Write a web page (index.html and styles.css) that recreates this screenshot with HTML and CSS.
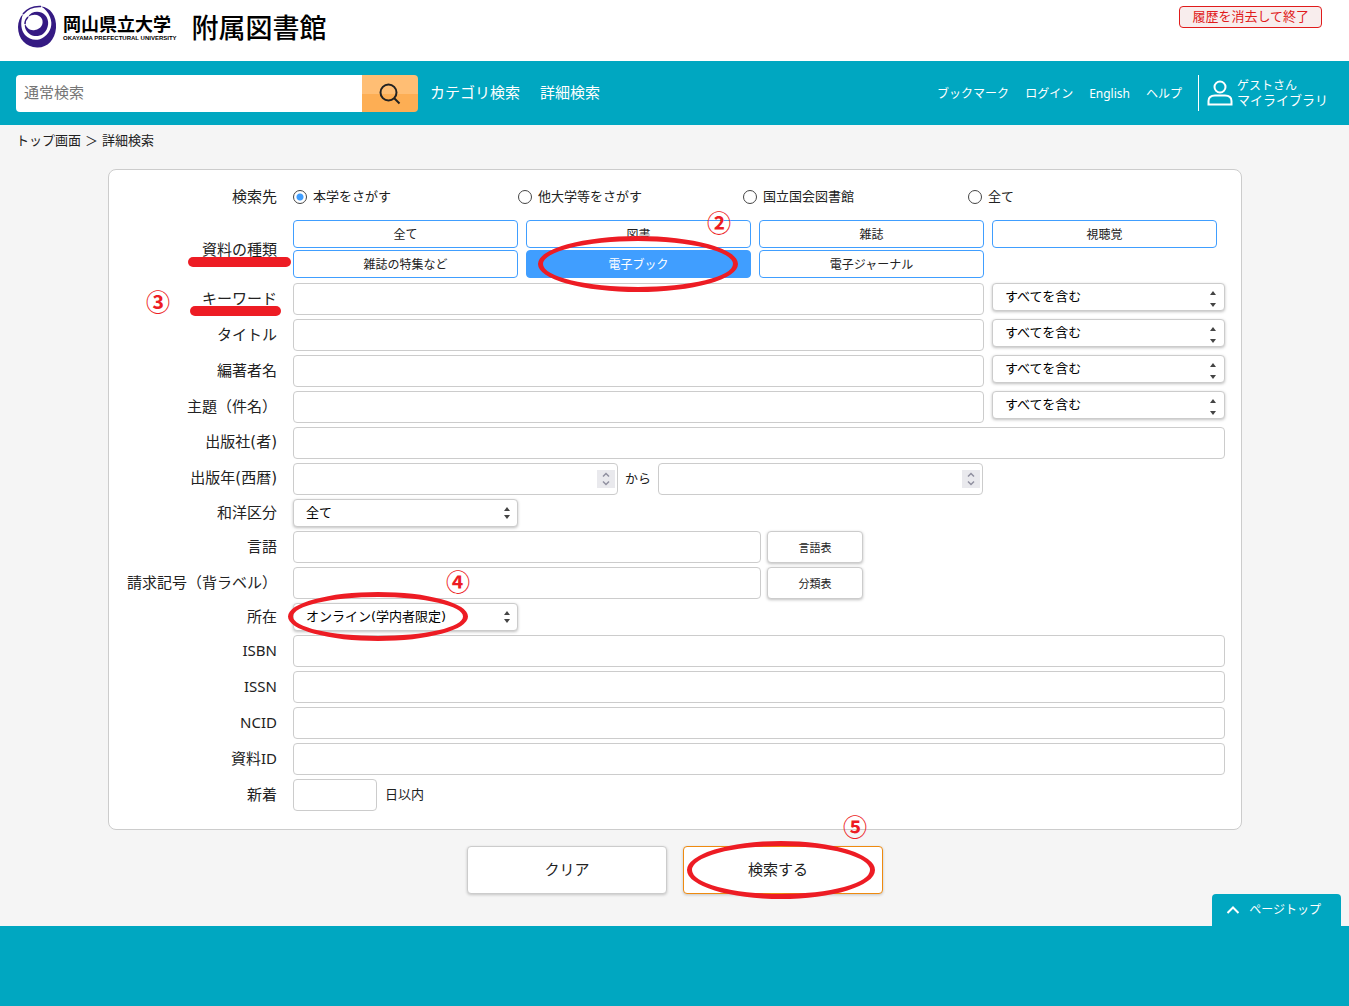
FILE: index.html
```html
<!DOCTYPE html>
<html lang="ja">
<head>
<meta charset="utf-8">
<meta name="viewport" content="width=device-width, initial-scale=1">
<title>詳細検索 - 岡山県立大学 附属図書館</title>
<link rel="stylesheet" href="styles.css">
</head>
<body>
<header class="site-header">
  <a class="brand" href="#">
    <svg class="brand-mark" viewBox="0 0 42 44" aria-hidden="true">
      <path d="M25 1.500C34 2 41 11 40 23C39 35 31 43 21 42.500C10 42 2 34 2 22C2 17 4 12 7 9C4 18 5 25 9 30C14 35.500 22 36.500 28 32C35 27 37 19 34 12C32 7 29 3.500 25 1.500Z" fill="#351a83"/>
      <path d="M12 12C15 6 24 5 29 10C34 15 33 24 27 29C21 33 13 31 10 25C9 23 8.500 21 9 19C11 23 14 26 19 25C25 24 28 19 26 14C24 10 18 8 12 12Z" fill="#351a83"/>
      <path d="M7 9C11 4 17 1 25 1.500M9 19C9 16 10 14 12 12" fill="none" stroke="#351a83" stroke-width="1.500"/>
    </svg>
    <span class="brand-text">
      <span class="brand-name">岡山県立大学</span>
      <span class="brand-sub">OKAYAMA PREFECTURAL UNIVERSITY</span>
    </span>
    <span class="brand-library">附属図書館</span>
  </a>
  <button class="exit-button" type="button">履歴を消去して終了</button>
</header>

<nav class="navbar">
  <form class="quick-search">
    <input class="quick-input" type="text" placeholder="通常検索" aria-label="通常検索">
    <button class="quick-button" type="button" aria-label="検索">
      <svg width="22" height="22" viewBox="0 0 22 22" fill="none" stroke="#222" stroke-width="2" aria-hidden="true"><circle cx="9.500" cy="9.500" r="8"/><path d="M15 15l5.500 5.500"/></svg>
    </button>
  </form>
  <div class="nav-main">
    <a href="#">カテゴリ検索</a>
    <a href="#">詳細検索</a>
  </div>
  <div class="nav-side">
    <a class="nav-link" href="#">ブックマーク</a>
    <a class="nav-link" href="#">ログイン</a>
    <a class="nav-link" href="#">English</a>
    <a class="nav-link" href="#">ヘルプ</a>
    <a class="user" href="#">
      <svg width="26" height="28" viewBox="0 0 26 28" fill="none" stroke="#fff" stroke-width="2" aria-hidden="true"><circle cx="13" cy="8" r="5.500"/><path d="M1.500 25.500V22C1.500 18.500 4 16.500 8 16.500H18C22 16.500 24.500 18.500 24.500 22V25.500Z"/></svg>
      <span class="user-text"><span class="user-name">ゲストさん</span><span>マイライブラリ</span></span>
    </a>
  </div>
</nav>

<main class="page">
  <div class="breadcrumb"><a href="#">トップ画面</a><span>＞</span><span>詳細検索</span></div>

  <form class="search-form">
    <div class="card">
      <div class="row row-target" role="radiogroup" aria-labelledby="l-target">
        <span class="label" id="l-target">検索先</span>
        <div class="radios">
          <label><input type="radio" name="target" checked><span>本学をさがす</span></label>
          <label><input type="radio" name="target"><span>他大学等をさがす</span></label>
          <label><input type="radio" name="target"><span>国立国会図書館</span></label>
          <label><input type="radio" name="target"><span>全て</span></label>
        </div>
      </div>
      <div class="row">
        <span class="label">資料の種類<i class="underline underline-type"></i></span>
        <div class="types">
          <button type="button">全て</button>
          <button type="button">図書</button>
          <button type="button">雑誌</button>
          <button type="button">視聴覚</button>
          <button type="button">雑誌の特集など</button>
          <button type="button" class="active">電子ブック<i class="ring ring-type"></i><b class="step step-2">②</b></button>
          <button type="button">電子ジャーナル</button>
        </div>
      </div>
      <div class="row">
        <label class="label" for="keyword">キーワード<i class="underline underline-keyword"></i><b class="step step-3">③</b></label>
        <div class="with-match">
          <input class="field" id="keyword" type="text">
          <select class="select select-tall" aria-label="キーワードの条件"><option>すべてを含む</option></select>
        </div>
      </div>
      <div class="row">
        <label class="label" for="title">タイトル</label>
        <div class="with-match">
          <input class="field" id="title" type="text">
          <select class="select select-tall" aria-label="タイトルの条件"><option>すべてを含む</option></select>
        </div>
      </div>
      <div class="row">
        <label class="label" for="author">編著者名</label>
        <div class="with-match">
          <input class="field" id="author" type="text">
          <select class="select select-tall" aria-label="編著者名の条件"><option>すべてを含む</option></select>
        </div>
      </div>
      <div class="row">
        <label class="label" for="subject">主題（件名）</label>
        <div class="with-match">
          <input class="field" id="subject" type="text">
          <select class="select select-tall" aria-label="主題の条件"><option>すべてを含む</option></select>
        </div>
      </div>
      <div class="row">
        <label class="label wide-parens" for="publisher">出版社(者)</label>
        <input class="field" id="publisher" type="text">
      </div>
      <div class="row">
        <label class="label wide-parens" for="year-from">出版年(西暦)</label>
        <div class="years">
          <input class="field number" id="year-from" type="number">
          <label for="year-to">から</label>
          <input class="field number" id="year-to" type="number">
        </div>
      </div>
      <div class="row">
        <label class="label" for="division">和洋区分</label>
        <select class="select select-short" id="division"><option>全て</option></select>
      </div>
      <div class="row">
        <label class="label" for="language">言語</label>
        <div class="with-table">
          <input class="field" id="language" type="text">
          <button class="table-button" type="button">言語表</button>
        </div>
      </div>
      <div class="row">
        <label class="label" for="callno">請求記号（背ラベル）</label>
        <div class="with-table">
          <input class="field" id="callno" type="text">
          <button class="table-button" type="button">分類表</button>
        </div>
      </div>
      <div class="row">
        <label class="label" for="location">所在</label>
        <div class="location">
          <select class="select select-short wide-parens" id="location"><option>オンライン(学内者限定)</option></select>
          <i class="ring ring-location"></i><b class="step step-4">④</b>
        </div>
      </div>
      <div class="row">
        <label class="label" for="isbn">ISBN</label>
        <input class="field" id="isbn" type="text">
      </div>
      <div class="row">
        <label class="label" for="issn">ISSN</label>
        <input class="field" id="issn" type="text">
      </div>
      <div class="row">
        <label class="label" for="ncid">NCID</label>
        <input class="field" id="ncid" type="text">
      </div>
      <div class="row">
        <label class="label" for="material">資料ID</label>
        <input class="field" id="material" type="text">
      </div>
      <div class="row">
        <label class="label" for="recent">新着</label>
        <div class="recent">
          <input class="field" id="recent" type="text">
          <span>日以内</span>
        </div>
      </div>
    </div>

    <div class="actions">
      <button class="action" type="reset">クリア</button>
      <button class="action action-primary" type="button">検索する<i class="ring ring-submit"></i><b class="step step-5">⑤</b></button>
    </div>
  </form>
</main>

<footer class="footer">
  <a class="page-top" href="#">
    <svg width="14" height="10" viewBox="0 0 14 10" fill="none" stroke="#fff" stroke-width="2" aria-hidden="true"><path d="M1.500 8L7 2.500L12.500 8"/></svg>
    ページトップ
  </a>
</footer>
</body>
</html>
```
FILE: styles.css
```css
* {
  box-sizing: border-box;
}

body {
  margin: 0;
  background: #00a7c1;
  color: #222;
  font-family: "Noto Sans", "Noto Sans CJK JP", sans-serif;
  font-size: 13px;
  line-height: 20px;
}

button,
input,
select {
  margin: 0;
  font-family: inherit;
  color: inherit;
}

a {
  color: inherit;
  text-decoration: none;
}

i,
b {
  font-style: normal;
}

/* Header */
.site-header {
  display: flex;
  justify-content: space-between;
  align-items: flex-start;
  height: 61px;
  padding: 5px 27px 0 16px;
  background: #fff;
}

.brand {
  display: flex;
  align-items: center;
  color: #000;
}

.brand-mark {
  width: 42px;
  height: 44px;
}

.brand-text {
  display: flex;
  flex-direction: column;
  margin: 2px 15px 0 5px;
}

.brand-name {
  font-size: 18px;
  font-weight: 700;
  line-height: 20px;
}

.brand-sub {
  font-family: "Liberation Sans", sans-serif;
  font-size: 6px;
  font-weight: 700;
  line-height: 8px;
  white-space: nowrap;
}

.brand-library {
  font-family: "Noto Sans CJK JP", sans-serif;
  font-size: 27px;
  font-weight: 500;
  line-height: 40px;
}

.exit-button {
  height: 22px;
  margin-top: 1px;
  padding: 0 12px 2px;
  border: 1px solid #e01b1b;
  border-radius: 4px;
  background: #f8eded;
  color: #e01b1b;
  font-size: 13px;
  line-height: 18px;
}

/* Navigation */
.navbar {
  display: flex;
  align-items: center;
  height: 64px;
  padding: 0 21px 0 16px;
  background: #00a7c1;
  color: #fff;
}

.quick-search {
  display: flex;
  flex: 0 1 402px;
  height: 37px;
}

.quick-input {
  flex: 1;
  min-width: 0;
  padding: 0 8px 2px;
  border: 0;
  border-radius: 4px 0 0 4px;
  background: #fff;
  color: #222;
  font-size: 15px;
}

.quick-input::placeholder {
  color: #757575;
}

.quick-button {
  display: flex;
  align-items: center;
  justify-content: center;
  width: 56px;
  padding: 2px 0 0;
  border: 0;
  border-radius: 0 4px 4px 0;
  background: linear-gradient(#ffbe74 50%, #fdae54 50%);
}

.nav-main {
  display: flex;
  gap: 20px;
  margin-left: 12px;
  padding-bottom: 2px;
  font-size: 15px;
  white-space: nowrap;
}

.nav-side {
  display: flex;
  align-items: center;
  gap: 16px;
  margin-left: auto;
  font-size: 12px;
  white-space: nowrap;
}

.nav-link {
  padding-top: 2px;
}

.user {
  display: flex;
  align-items: center;
  gap: 4px;
  height: 36px;
  padding-left: 8px;
  border-left: 1px solid #fff;
  font-size: 13px;
  line-height: 15px;
}

.user-text {
  display: flex;
  flex-direction: column;
}

.user-name {
  font-size: 12px;
}

/* Page */
.page {
  padding: 5px 107px 32px 108px;
  background: #f5f5f5;
}

.breadcrumb {
  display: flex;
  gap: 4px;
  margin: 0 0 19px -92px;
}

.card {
  display: flex;
  flex-direction: column;
  gap: 4px;
  padding: 8px 16px 18px 0;
  border: 1px solid #ccc;
  border-radius: 8px;
  background: #fff;
}

.row {
  display: grid;
  grid-template-columns: 168px minmax(0, 1fr);
  column-gap: 16px;
  align-items: center;
}

.row-target {
  min-height: 38px;
}

.label {
  position: relative;
  justify-self: end;
  padding-bottom: 2px;
  font-size: 15px;
  white-space: nowrap;
}

.wide-parens {
  font-family: "DejaVu Sans", "Noto Sans CJK JP", sans-serif;
}

.radios {
  display: flex;
}

.radios label {
  display: flex;
  align-items: center;
  gap: 6px;
  flex: 0 1 225px;
}

.radios span,
.recent span,
.years label {
  padding-bottom: 2px;
}

.radios input {
  appearance: none;
  width: 14px;
  height: 14px;
  border: 1px solid #444;
  border-radius: 50%;
  background: #fff;
}

.radios input:checked {
  background: radial-gradient(circle, #409eff 3px, #fff 4px);
}

.types {
  display: grid;
  grid-template-columns: repeat(4, 1fr);
  gap: 2px 8px;
  padding: 0 8px 1px 0;
}

.types button {
  position: relative;
  height: 28px;
  padding: 0 0 1px;
  border: 1px solid #409eff;
  border-radius: 4px;
  background: #fff;
  font-size: 12px;
}

.types .active {
  z-index: 1;
  background: #409eff;
  color: #fff;
}

.field {
  width: 100%;
  min-width: 0;
  height: 32px;
  padding: 0 8px;
  border: 1px solid #ccc;
  border-radius: 4px;
  background: #fff;
  font-size: 13px;
}

.select {
  appearance: none;
  height: 28px;
  padding: 0 24px 2px 12px;
  border: 1px solid #ccc;
  border-radius: 4px;
  background: #fff no-repeat;
  box-shadow: 0 1px 3px rgba(0, 0, 0, 0.25);
  color: #000;
  font-size: 13px;
}

.select-short {
  width: 225px;
  background-image: url("data:image/svg+xml,%3Csvg xmlns='http://www.w3.org/2000/svg' width='6' height='12'%3E%3Cpath d='M0 4L3 0L6 4ZM0 8L3 12L6 8Z' fill='%23444'/%3E%3C/svg%3E");
  background-position: right 7px center;
}

.select-tall {
  width: 100%;
  background-image: url("data:image/svg+xml,%3Csvg xmlns='http://www.w3.org/2000/svg' width='6' height='16'%3E%3Cpath d='M0 4L3 0L6 4ZM0 12L3 16L6 12Z' fill='%23444'/%3E%3C/svg%3E");
  background-position: right 8px bottom 3px;
}

.with-match {
  display: grid;
  grid-template-columns: calc(75% - 8px) 1fr;
  gap: 8px;
}

.years {
  display: flex;
  align-items: center;
  gap: 7px;
}

.number {
  appearance: textfield;
  width: 325px;
  padding-right: 24px;
  background: #fff url("data:image/svg+xml,%3Csvg xmlns='http://www.w3.org/2000/svg' width='18' height='18'%3E%3Cpath d='M0 0H18V18H0Z' fill='%23e9e9ed'/%3E%3Cpath d='M6 6.500L9 3.500L12 6.500M6 11.500L9 14.500L12 11.500' fill='none' stroke='%239090a0' stroke-width='1.500'/%3E%3C/svg%3E") no-repeat right 2px center;
}

.number::-webkit-inner-spin-button {
  appearance: none;
}

.with-table {
  display: flex;
  gap: 6px;
}

.with-table .field {
  width: 468px;
}

.table-button {
  width: 96px;
  padding-bottom: 2px;
  border: 1px solid #ccc;
  border-radius: 4px;
  background: #fff;
  box-shadow: 0 1px 3px rgba(0, 0, 0, 0.25);
  font-size: 11px;
}

.location {
  position: relative;
  display: flex;
}

.recent {
  display: flex;
  align-items: center;
  gap: 8px;
}

.recent .field {
  width: 84px;
}

.actions {
  display: flex;
  justify-content: center;
  gap: 16px;
  margin-top: 16px;
}

.action {
  position: relative;
  width: 200px;
  height: 48px;
  padding: 0 0 4px;
  border: 1px solid #ccc;
  border-radius: 4px;
  background: #fff;
  box-shadow: 0 1px 3px rgba(0, 0, 0, 0.2);
  font-size: 15px;
}

.action-primary {
  padding-right: 10px;
  border-color: #ee8a10;
}

/* Guide marks laid over the controls */
.ring,
.underline,
.step {
  position: absolute;
  pointer-events: none;
}

.ring {
  border: 5px solid #ed1c24;
  border-radius: 50%;
}

.underline {
  top: 18px;
  height: 10px;
  border-radius: 5px;
  background: #ed1c24;
}

.step {
  color: #ed1c24;
  font-family: "Noto Sans CJK JP", sans-serif;
  font-size: 24px;
  font-weight: 700;
  line-height: 26px;
}

.ring-type {
  inset: -15px 12px -15px 11px;
}

.ring-location {
  top: -11px;
  left: -5px;
  width: 180px;
  height: 49px;
}

.ring-submit {
  inset: -6px 7px -6px 3px;
}

.underline-type {
  right: -14px;
  left: -14px;
}

.underline-keyword {
  right: -4px;
  left: -12px;
}

.step-2 {
  top: -42px;
  right: 19px;
}

.step-3 {
  top: 0;
  left: -56px;
}

.step-4 {
  top: -35px;
  left: 153px;
}

.step-5 {
  top: -34px;
  right: 15px;
}

/* Footer */
.footer {
  position: relative;
  height: 80px;
  background: #00a7c1;
}

.page-top {
  position: absolute;
  right: 8px;
  bottom: 100%;
  display: flex;
  align-items: center;
  gap: 9px;
  height: 32px;
  padding: 0 20px 0 14px;
  border-radius: 4px 4px 0 0;
  background: #00a7c1;
  color: #fff;
  font-size: 12px;
}
```
